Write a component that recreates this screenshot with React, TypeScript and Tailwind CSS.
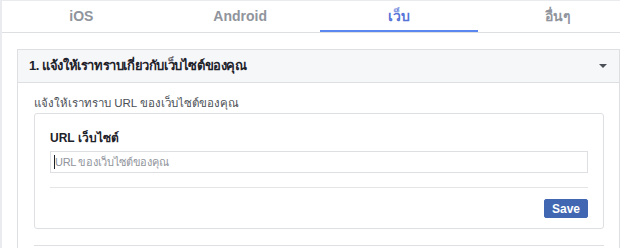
const tabs = [
  { label: "iOS", active: false },
  { label: "Android", active: false },
  { label: "เว็บ", active: true },
  { label: "อื่นๆ", active: false },
];

export default function App() {
  return (
    <div className="w-[620px] h-[248px] overflow-hidden bg-[#e9ebee] pl-[2px] pt-[1px] font-['Liberation_Sans','Noto_Sans',sans-serif]">
      <div className="w-[640px] h-[260px] bg-white">
        {/* Tabs */}
        <div className="flex w-[635px] border-b border-[#dddfe2]">
          {tabs.map((t) => (
            <div
              key={t.label}
              className={`w-[158.75px] h-[31px] flex items-center justify-center text-[14px] font-bold ${
                t.active ? "text-[#5674d8] border-b-2 border-[#5b87f0] pt-[2px]" : "text-[#90949c]"
              }`}
            >
              {t.label}
            </div>
          ))}
        </div>

        {/* Panel */}
        <div className="ml-[15px] mt-[16px] w-[603px] border border-[#dddfe2]">
          <div className="h-[33px] bg-[#f6f7f9] border-b border-[#dddfe2] flex items-center justify-between pl-[11px] pr-[12px]">
            <span className="text-[13px] tracking-[-0.4px] font-bold text-[#1d2129]">
              1. แจ้งให้เราทราบเกี่ยวกับเว็บไซต์ของคุณ
            </span>
            <span className="w-0 h-0 border-x-[4px] border-x-transparent border-t-[4px] border-t-[#4b4f56]" />
          </div>

          <div className="px-[16px] pt-[12px]">
            <p className="text-[11.5px] leading-[16px] text-[#4b4f56]">
              แจ้งให้เราทราบ URL ของเว็บไซต์ของคุณ
            </p>

            <div className="mt-[2px] w-[570px] border border-[#dddfe2] rounded-[3px] px-[15px] pt-[17px] pb-[10px]">
              <label className="block text-[12px] leading-[14px] font-bold text-[#1d2129]">
                URL เว็บไซต์
              </label>
              <div className="mt-[6px] h-[22px] border border-[#dddfe2] flex items-center px-[3px]">
                <span className="w-px h-[14px] bg-[#1d2129]" />
                <span className="text-[11px] tracking-[-0.3px] text-[#90949c]">URL ของเว็บไซต์ของคุณ</span>
              </div>
              <div className="mt-[14px] border-t border-[#e5e5e5]" />
              <div className="mt-[11px] flex justify-end">
                <button className="h-[19px] px-[7px] bg-[#4267b2] border border-[#4267b2] rounded-[2px] text-white text-[12px] font-bold leading-none">
                  Save
                </button>
              </div>
            </div>

            <div className="mt-[16px] w-[570px] h-[20px] border-t border-[#dddfe2]" />
          </div>
        </div>
      </div>
    </div>
  );
}
